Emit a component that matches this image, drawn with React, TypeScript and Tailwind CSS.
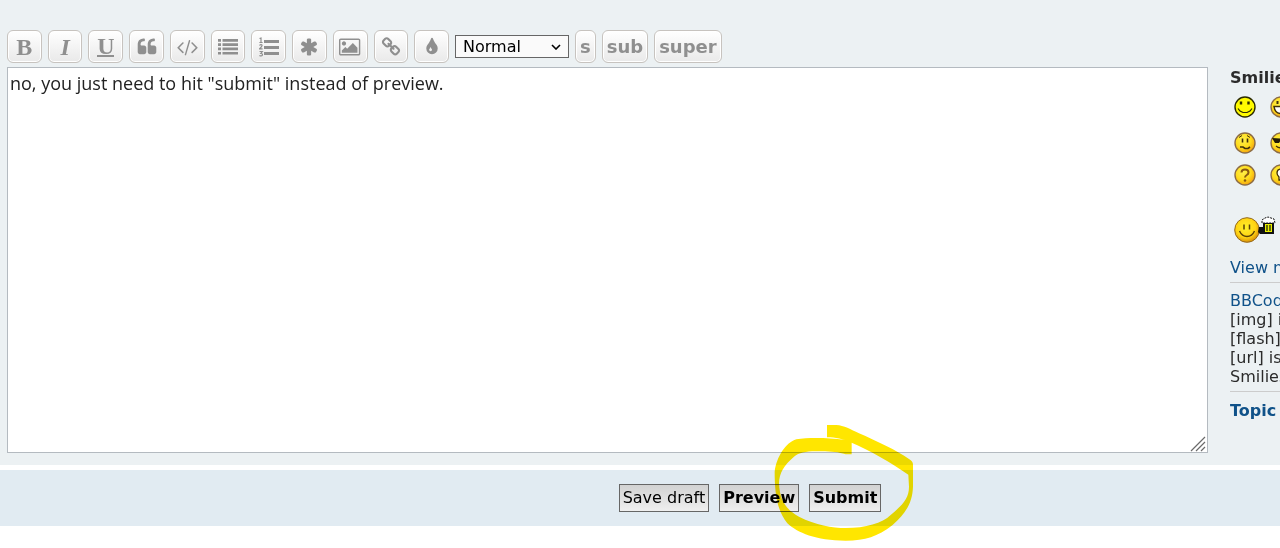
import type { ReactNode } from "react";

type IconProps = { viewBox: string; d: string; className: string };

const Icon = ({ viewBox, d, className }: IconProps) => (
  <svg viewBox={viewBox} fill="currentColor" className={className}>
    <path d={d} />
  </svg>
);

const ListOlIcon = () => (
  <svg viewBox="0 0 20 20" fill="currentColor" className="size-5">
    <path d="M5 3h15v3H5zM5 9h15v3H5zM5 15h15v3H5z" />
    <g fill="none" stroke="currentColor" strokeWidth="1.2">
      <path d="M0.500 1.500L2 1v4.500M0.400 5.500h3.200" />
      <path d="M0.500 8.500q1-1.500 2.300-.7 1 1-2.200 4h3" />
      <path d="M0.500 14.500h2.800l-1.500 2q2 0 1.600 1.600-1 1.500-3 .3" />
    </g>
  </svg>
);

const quote =
  "M832 960v384q0 80-56 136t-136 56h-384q-80 0-136-56t-56-136v-704q0-104 40.5-198.5t109.5-163.5 163.5-109.5 198.5-40.5h64q26 0 45 19t19 45v128q0 26-19 45t-45 19h-64q-106 0-181 75t-75 181v32q0 40 28 68t68 28h224q80 0 136 56t56 136zm896 0v384q0 80-56 136t-136 56h-384q-80 0-136-56t-56-136v-704q0-104 40.5-198.5t109.5-163.5 163.5-109.5 198.5-40.5h64q26 0 45 19t19 45v128q0 26-19 45t-45 19h-64q-106 0-181 75t-75 181v32q0 40 28 68t68 28h224q80 0 136 56t56 136z";
const code =
  "M681 1399l-50 50q-10 10-23 10t-23-10l-466-466q-10-10-10-23t10-23l466-466q10-10 23-10t23 10l50 50q10 10 10 23t-10 23l-393 393 393 393q10 10 10 23t-10 23zm591-1067l-373 1291q-4 13-15.5 19.5t-23.5 2.5l-62-17q-13-4-19.5-15.5t-2.5-24.5l373-1291q4-13 15.5-19.5t23.5-2.5l62 17q13 4 19.5 15.5t2.5 24.5zm657 651l-466 466q-10 10-23 10t-23-10l-50-50q-10-10-10-23t10-23l393-393-393-393q-10-10-10-23t10-23l50-50q10-10 23-10t23 10l466 466q10 10 10 23t-10 23z";
const list =
  "M0 0h3v2.700H0zM4.500 0H20v2.700H4.500zM0 4.300h3V7H0zM4.500 4.300H20V7H4.500zM0 8.600h3v2.700H0zM4.500 8.600H20v2.700H4.500zM0 12.900h3v2.700H0zM4.500 12.900H20v2.700H4.500z";
const asterisk =
  "M1546 1050q46 26 59.5 77.5t-12.5 97.5l-64 110q-26 46-77.5 59.5t-97.5-12.5l-266-153v307q0 52-38 90t-90 38h-128q-52 0-90-38t-38-90v-307l-266 153q-46 26-97.5 12.5t-77.5-59.5l-64-110q-26-46-12.5-97.5t59.5-77.5l266-154-266-154q-46-26-59.5-77.5t12.5-97.5l64-110q26-46 77.5-59.5t97.5 12.5l266 153v-307q0-52 38-90t90-38h128q52 0 90 38t38 90v307l266-153q46-26 97.5-12.5t77.5 59.5l64 110q26 46 12.5 97.5t-59.5 77.5l-266 154z";
const picture =
  "M576 576q0 80-56 136t-136 56-136-56-56-136 56-136 136-56 136 56 56 136zm1024 384v448h-1408v-192l320-320 160 160 512-512zm96-704h-1600q-13 0-22.5 9.5t-9.5 22.5v1216q0 13 9.5 22.5t22.5 9.5h1600q13 0 22.5-9.5t9.5-22.5v-1216q0-13-9.5-22.5t-22.5-9.5zm160 32v1216q0 66-47 113t-113 47h-1600q-66 0-113-47t-47-113v-1216q0-66 47-113t113-47h1600q66 0 113 47t47 113z";
const chain =
  "M1520 1216q0-40-28-68l-208-208q-28-28-68-28-42 0-72 32 3 3 19 18.5t21.5 21.5 15 19 13 25.5 3.5 27.5q0 40-28 68t-68 28q-15 0-27.5-3.5t-25.5-13-19-15-21.5-21.5-18.5-19q-33 31-33 73 0 40 28 68l206 207q27 27 68 27 40 0 68-26l147-146q28-28 28-67zm-703-705q0-40-28-68l-206-207q-28-28-68-28-39 0-68 27l-147 146q-28 28-28 67 0 40 28 68l208 208q27 27 68 27 42 0 72-31-3-3-19-18.5t-21.5-21.5-15-19-13-25.5-3.5-27.5q0-40 28-68t68-28q15 0 27.5 3.5t25.5 13 19 15 21.5 21.5 18.5 19q33-31 33-73zm895 705q0 120-85 203l-147 146q-83 83-203 83-121 0-204-85l-206-207q-83-83-83-203 0-123 88-209l-88-88q-86 88-208 88-120 0-204-84l-208-208q-84-84-84-204t85-203l147-146q83-83 203-83 121 0 204 85l206 207q83 83 83 203 0 123-88 209l88 88q86-88 208-88 120 0 204 84l208 208q84 84 84 204z";
const drop =
  "M896 1152q0-36-20-69-1-1-15.5-22.5t-25.5-38-25-44-21-50.5q-4-16-21-16t-21 16q-7 23-21 50.5t-25 44-25.5 38-15.5 22.5q-20 33-20 69 0 53 37.5 90.5t90.5 37.5 90.5-37.5 37.5-90.5zm512-128q0 212-150 362t-362 150-362-150-150-362q0-145 81-275 6-9 62.5-90.5t101-151 99.5-178 83-201.5q9-30 34-47t51-17 51.5 17 33.5 47q28 93 83 201.5t99.5 178 101 151 62.5 90.5q81 127 81 275z";

const tools: { label: string; icon: ReactNode }[] = [
  { label: "Bold", icon: <span className="font-bold">B</span> },
  { label: "Italic", icon: <span className="font-bold italic">I</span> },
  { label: "Underline", icon: <span className="border-b-2 border-[#8f8f8f] leading-[18px]">U</span> },
  { label: "Quote", icon: <Icon viewBox="0 0 1792 1792" d={quote} className="size-5" /> },
  { label: "Code", icon: <Icon viewBox="0 0 2048 1792" d={code} className="h-5 w-[23px]" /> },
  { label: "List", icon: <Icon viewBox="0 0 20 16" d={list} className="h-4 w-5" /> },
  { label: "Ordered list", icon: <ListOlIcon /> },
  { label: "List item", icon: <Icon viewBox="0 0 1792 1792" d={asterisk} className="size-5" /> },
  { label: "Image", icon: <Icon viewBox="-64 0 1984 1792" d={picture} className="h-5 w-[22px]" /> },
  { label: "Link", icon: <Icon viewBox="0 0 1792 1792" d={chain} className="size-5" /> },
  { label: "Colour", icon: <Icon viewBox="0 0 1792 1792" d={drop} className="size-5" /> },
];

const toolButton =
  "flex h-[33px] items-center justify-center rounded-[6px] border border-[#c7c3bf] bg-linear-to-b from-white to-[#e9e9e9] text-[#8f8f8f] shadow-[inset_0_0_0_1px_#ffffff]";

const Face = ({ mood }: { mood: string }) => (
  <svg viewBox="0 0 22 22" className="size-[22px]">
    <defs>
      <radialGradient id={`face-${mood}`} cx="40%" cy="35%" r="65%">
        <stop offset="0" stopColor="#fff04a" />
        <stop offset="0.6" stopColor="#ffdc1c" />
        <stop offset="1" stopColor="#f5a810" />
      </radialGradient>
    </defs>
    <circle
      cx="11"
      cy="11"
      r="10"
      fill={mood === "smile" ? "#fffb00" : `url(#face-${mood})`}
      stroke={mood === "smile" ? "#2c2b00" : "#8c6c44"}
      strokeWidth="1.4"
    />
    {mood === "smile" && (
      <g stroke="#2c2b00" fill="none">
        <path d="M7 5.500v3M14.500 5.500v3" strokeWidth="2.4" />
        <path d="M4 12.500l2 2.500 3 1.500h4l3-1.500 2-2.500" strokeWidth="1.2" />
      </g>
    )}
    {mood === "grin" && (
      <>
        <path d="M7.500 5v3M14 5v3" stroke="#40300a" strokeWidth="2" />
        <path d="M4 10.500h14q-1 7-7 7t-7-7z" fill="#fff" stroke="#40300a" strokeWidth="1.500" />
      </>
    )}
    {mood === "confused" && (
      <g stroke="#40300a" fill="none">
        <path d="M8.500 6.500v4M13.500 6.500v4" strokeWidth="1.600" />
        <path d="M5 5.500l3-2M13 3.500l3 2" />
        <path d="M6 15h3l2 1.500h3l2-1.500" strokeWidth="1.600" />
      </g>
    )}
    {mood === "cool" && (
      <>
        <path d="M2 6l18 1-2 4h-5l-2-3-2 3H5z" fill="#221a05" />
        <path d="M6 14q5 4 9-1" stroke="#40300a" strokeWidth="1.300" fill="none" />
      </>
    )}
    {mood === "question" && (
      <>
        <path d="M7.500 8.500q0-3 3.500-3t3.500 3q0 1.500-1.700 2.500t-1.800 2.500" stroke="#8a5a10" strokeWidth="2" fill="none" />
        <circle cx="11" cy="16.500" r="1.300" fill="#8a5a10" />
      </>
    )}
    {mood === "idea" && (
      <path d="M11 5q-4 0-4 4 0 2 2 4v3h4v-3q2-2 2-4 0-4-4-4z" fill="#fff" stroke="#40300a" strokeWidth="1.300" />
    )}
  </svg>
);

const Cheers = () => (
  <svg viewBox="0 0 44 28" className="h-7 w-11">
    <defs>
      <radialGradient id="cheers" cx="45%" cy="40%" r="62%">
        <stop offset="0" stopColor="#fff02a" />
        <stop offset="0.650" stopColor="#ffd313" />
        <stop offset="1" stopColor="#d58a08" />
      </radialGradient>
    </defs>
    <circle cx="13" cy="15" r="12.300" fill="url(#cheers)" stroke="#93691c" />
    <path d="M10 9.500v5M15.500 9.500v5" stroke="#5a4206" strokeWidth="1.500" />
    <path d="M5.500 16q2.500 5.500 7.500 5.500t7.500-5.500" stroke="#5a4206" strokeWidth="1.400" fill="none" />
    <path d="M25 12h5v7h-4l-2-2z" fill="#111" />
    <rect x="30" y="8" width="9" height="10" fill="#e8f000" stroke="#111" strokeWidth="2" />
    <path d="M33 10v6M36 10v6" stroke="#111" strokeWidth="1.200" />
    <path d="M28 8V5l3-2 3-1 3 1 3 1 1 4z" fill="#fff" stroke="#111" strokeDasharray="2 1" />
  </svg>
);

const link = "text-[#105289] hover:underline";
const formButton =
  "h-7 border border-[#666666] bg-linear-to-b from-[#d2d2d2] to-[#efefef] px-[3px] text-base leading-5 text-black";

export default function App() {
  return (
    <div className="overflow-hidden bg-white pb-[22px] font-['DejaVu_Sans',sans-serif] text-[#2b2b2b]">
      <div className="flex gap-[22px] bg-[#ecf1f3] pb-3 pl-[7px] pt-[30px]">
        <main className="min-w-0 flex-1">
          <div className="mb-1 flex items-center gap-[6px]">
            <div className="grid w-[442px] grid-cols-11 gap-[6px]">
              {tools.map((tool) => (
                <button
                  key={tool.label}
                  type="button"
                  aria-label={tool.label}
                  className={`${toolButton} font-['Liberation_Serif',serif] text-2xl font-bold`}
                >
                  {tool.icon}
                </button>
              ))}
            </div>
            <div className="relative">
              <select
                aria-label="Font size"
                className="block h-[23px] w-[114px] appearance-none border border-[#666666] bg-[#fafafa] pl-[7px] text-base leading-5 text-black"
              >
                <option>Normal</option>
              </select>
              <svg viewBox="0 0 10 6" className="pointer-events-none absolute right-2 top-[9px] h-[6px] w-[10px]">
                <path d="M1 1l4 4 4-4" fill="none" stroke="#000" strokeWidth="1.600" />
              </svg>
            </div>
            {["s", "sub", "super"].map((tag) => (
              <button key={tag} type="button" className={`${toolButton} px-1 text-lg font-bold`}>
                {tag}
              </button>
            ))}
          </div>

          <div className="relative">
            <textarea
              aria-label="Message"
              className="block h-[386px] w-full resize-none border border-[#b4bac0] bg-white px-[2px] py-[3px] font-['Open_Sans',sans-serif] text-lg leading-6 text-[#222222] outline-none"
              defaultValue={'no, you just need to hit "submit" instead of preview.'}
            />
            <svg viewBox="0 0 16 16" className="pointer-events-none absolute bottom-px right-[2px] size-4">
              <path d="M1 15L15 1M6 15l9-9M11 15l4-4" stroke="#6b6b6b" strokeWidth="1.200" />
            </svg>
          </div>
        </main>

        <aside className="w-[50px] shrink-0 whitespace-nowrap pt-[38px] text-base leading-[19px]">
          <strong className="block">Smilies</strong>
          <div className="grid grid-cols-[22px_22px] gap-x-[14px] pl-1 pt-[9px]">
            <Face mood="smile" />
            <Face mood="grin" />
          </div>
          <div className="grid grid-cols-[22px_22px] gap-x-[14px] gap-y-[10px] pl-1 pt-[14px]">
            <Face mood="confused" />
            <Face mood="cool" />
            <Face mood="question" />
            <Face mood="idea" />
          </div>
          <div className="pl-1 pt-[29px]">
            <Cheers />
          </div>
          <a href="#smilies" className={`${link} mt-[15px] block`}>
            View more smilies
          </a>
          <hr className="mb-[6px] mt-[5px] w-[240px] border-[#cccccc]" />
          <div className="pt-[2px]">
            <a href="#bbcode" className={link}>
              BBCode
            </a>{" "}
            is ON
            <br />
            [img] is ON
            <br />
            [flash] is OFF
            <br />
            [url] is ON
            <br />
            Smilies are ON
          </div>
          <hr className="mb-[6px] mt-[5px] w-[240px] border-[#cccccc]" />
          <a href="#review" className={`${link} block pt-[3px] font-bold`}>
            Topic review
          </a>
        </aside>
      </div>

      <div className="mt-[5px] flex h-14 items-center justify-center gap-[10px] bg-[#e1ebf2] pl-[220px]">
        <button type="button" className={formButton}>
          Save draft
        </button>
        <button type="button" className={`${formButton} font-bold`}>
          Preview
        </button>
        <div className="relative">
          <button type="submit" className={`${formButton} block font-bold`}>
            Submit
          </button>
          {/* highlighter ring */}
          <svg
            viewBox="510 0 450 384"
            className="pointer-events-none absolute -left-10 -top-16 h-32 w-[150px] max-w-none mix-blend-multiply"
          >
            <path
              fill="#ffe600"
              d="M684 15H712C735 16 755 28 780 40C830 62 895 92 930 117Q942 124 942 134V200C940 245 925 275 880 316C835 350 800 362 740 362C650 362 595 338 565 310C532 270 527 210 527 155C533 110 560 68 592 58C630 52 690 54 735 59L758 66V103H740C715 95 690 93 650 94C620 94 600 98 585 110C555 135 540 160 540 190C542 240 560 268 600 290C650 315 700 324 740 324C800 324 850 310 875 285C910 255 930 235 930 200L928 164C880 130 810 90 758 68C730 56 710 52 684 52Z"
            />
          </svg>
        </div>
      </div>
    </div>
  );
}
